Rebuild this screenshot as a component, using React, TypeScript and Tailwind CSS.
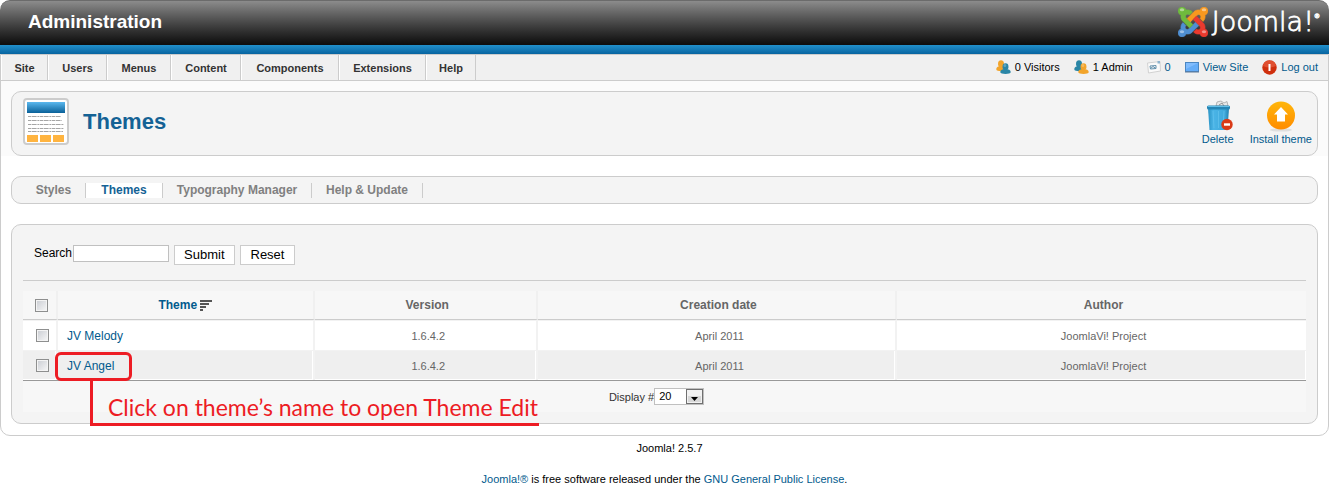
import React from "react";

const navItems = [
  { label: "Site", width: "w-[47px]" },
  { label: "Users", width: "w-[59px]" },
  { label: "Menus", width: "w-[64px]" },
  { label: "Content", width: "w-[70px]" },
  { label: "Components", width: "w-[98px]" },
  { label: "Extensions", width: "w-[87px]" },
  { label: "Help", width: "w-[50px]" },
];

const themes = [
  { name: "JV Melody", version: "1.6.4.2", date: "April 2011", author: "JoomlaVi! Project" },
  { name: "JV Angel", version: "1.6.4.2", date: "April 2011", author: "JoomlaVi! Project" },
];

const markArm =
  "M16.72 14.76L14.22 17.26l-2.37 2.37-.46.47c-1.37 1.36-3.3 1.83-5.05 1.4-.33 1.42-1.6 2.49-3.13 2.49C1.44 23.98 0 22.55 0 20.77c0-1.52 1.06-2.79 2.47-3.13-.44-1.75.02-3.7 1.4-5.07l.1-.1 2.37 2.37-.1.1c-.69.69-.69 1.81 0 2.5.69.69 1.81.69 2.5 0l.46-.47 2.37-2.37 2.5-2.5z";

const markArms = [
  { fill: "#4f8fd2", angle: 0 },
  { fill: "#6fbb3d", angle: 90 },
  { fill: "#f7981f", angle: 180 },
  { fill: "#ea3a2e", angle: 270 },
];

function JoomlaMark() {
  return (
    <svg className="h-[30px] w-[30px]" viewBox="0 0 24 24" aria-hidden="true">
      {markArms.map((arm) => (
        <g key={arm.fill} transform={`rotate(${arm.angle} 12 12)`}>
          <path d={markArm} fill={arm.fill} stroke={arm.fill} strokeWidth="0.5" />
        </g>
      ))}
      <g fill="#fff" opacity="0.45">
        <ellipse cx="3.2" cy="2.2" rx="1.8" ry="1.2" />
        <ellipse cx="20.8" cy="2.2" rx="1.8" ry="1.2" />
        <ellipse cx="3.2" cy="19.8" rx="1.8" ry="1.2" />
        <ellipse cx="20.8" cy="19.8" rx="1.8" ry="1.2" />
      </g>
    </svg>
  );
}

function PeopleIcon({ flip }: { flip?: boolean }) {
  const back = flip ? "#2a86a6" : "#f2a42b";
  const front = flip ? "#f2a42b" : "#2a86a6";
  return (
    <svg className="h-[15px] w-[15px]" viewBox="0 0 15 15" aria-hidden="true">
      <path d="M0.3 9.5 C0.3 6.8 2.5 6 5 6 S10 7 10 9.5 C10 11.8 0.3 11.8 0.3 9.5Z" fill={back} />
      <ellipse cx="5" cy="3.7" rx="3" ry="3.5" fill={back} />
      <path d="M4.3 12.3 C4.3 9.8 6.5 9 9.5 9 S14.7 9.8 14.7 12.3 C14.7 14.6 4.3 14.6 4.3 12.3Z" fill={front} />
      <ellipse cx="9.5" cy="6.7" rx="3" ry="3.4" fill={front} />
      <ellipse cx="8.9" cy="5.6" rx="1.4" ry="1.5" fill="#fff" opacity="0.25" />
    </svg>
  );
}

function MailIcon() {
  return (
    <svg className="h-[14px] w-[14px]" viewBox="0 0 14 14" aria-hidden="true">
      <path d="M0.5 3 L13 1.5 L13.5 11 L1.5 13Z" fill="#fafafa" stroke="#d2d2d2" />
      <path d="M10.5 1 h2.5 v2.5 h-2.5z" fill="#8fb4cf" />
      <path d="M3 6 L9 5.5 V8.5 L3.5 9Z M3.5 8.5 L6 6.5 L9 8.5" fill="none" stroke="#6290ac" />
    </svg>
  );
}

function ScreenIcon() {
  return (
    <svg className="h-[11px] w-[14px]" viewBox="0 0 14 11" aria-hidden="true">
      <rect x="0.5" y="0.5" width="13" height="9" fill="#65adf8" stroke="#4a86c2" />
      <path d="M1 1 H13 L1 7Z" fill="#80bcfd" />
      <path d="M0 10 h14" stroke="#5d7898" />
    </svg>
  );
}

function PowerIcon() {
  return (
    <svg className="h-[15px] w-[15px]" viewBox="0 0 15 15" aria-hidden="true">
      <circle cx="7.5" cy="7.5" r="7.2" fill="#cf2f0d" />
      <path d="M1 6 A6.6 6.6 0 0 1 14 6 Q7.5 9 1 6Z" fill="#e04f30" />
      <rect x="6.5" y="4" width="2" height="7" fill="#fff" />
    </svg>
  );
}

function ThemeIcon() {
  return (
    <svg className="h-[47px] w-[46px]" viewBox="0 0 46 47" aria-hidden="true">
      <defs>
        <linearGradient id="themeHead" x1="0" y1="0" x2="0" y2="1">
          <stop offset="0" stopColor="#5bb8ee" />
          <stop offset="1" stopColor="#0a6199" />
        </linearGradient>
      </defs>
      <rect x="1" y="1" width="44" height="45" rx="3" fill="#fff" stroke="#ccc" strokeWidth="2" />
      <rect x="4" y="4" width="38" height="11" fill="url(#themeHead)" />
      <path d="M5 18.5 H38 M5 22.5 H39 M5 26.5 H41 M5 30.5 H41 M5 33.5 H40" stroke="#a5a5a5" strokeWidth="1" strokeDasharray="3 0.6 5 0.8 2 0.6" />
      <path d="M4 37 h11 v7 h-11z M17 37 h11 v7 h-11z M30 37 h11 v7 h-11z" fill="#ffb440" />
    </svg>
  );
}

function TrashIcon() {
  return (
    <svg className="h-8 w-8" viewBox="0 0 32 32" aria-hidden="true">
      <defs>
        <linearGradient id="bin" x1="0" y1="0" x2="1" y2="0">
          <stop offset="0" stopColor="#2b93c4" />
          <stop offset="0.25" stopColor="#4ab4e6" />
          <stop offset="0.8" stopColor="#3fa9dc" />
          <stop offset="1" stopColor="#2380ae" />
        </linearGradient>
      </defs>
      <path d="M14 6 L15 2 L19 1 L22 3 L25 1.5 L26 6Z" fill="#e9e9e9" stroke="#a5a5a5" strokeWidth="0.8" />
      <path d="M17 5 l3 -2 l2 3" fill="none" stroke="#888" strokeWidth="0.9" />
      <path d="M6 8 H27 L25.5 30 H7.5Z" fill="url(#bin)" />
      <path d="M11 11 L12 28 M16.5 11 V28 M22 11 L21 28" stroke="#5fc0ec" strokeWidth="0.8" />
      <rect x="5" y="5.5" width="23" height="4" rx="1.5" fill="#2585b4" />
      <path d="M6 6.5 H27" stroke="#62bfe8" />
      <circle cx="25" cy="24.5" r="5.7" fill="#d93a17" />
      <rect x="22" y="23.3" width="6" height="2.4" fill="#fff" />
    </svg>
  );
}

function InstallIcon() {
  return (
    <svg className="h-8 w-8" viewBox="0 0 32 32" aria-hidden="true">
      <defs>
        <linearGradient id="upload" x1="0" y1="0" x2="0" y2="1">
          <stop offset="0" stopColor="#ffb60a" />
          <stop offset="1" stopColor="#ff8c00" />
        </linearGradient>
      </defs>
      <ellipse cx="16" cy="30" rx="11" ry="1.6" fill="#dedede" />
      <circle cx="16" cy="15.5" r="14" fill="url(#upload)" />
      <path d="M16 7 L23 14.5 H20 V21.5 H12 V14.5 H9Z" fill="#fff" />
    </svg>
  );
}

function SortIcon() {
  return (
    <svg className="h-[11px] w-[12px]" viewBox="0 0 12 11" aria-hidden="true">
      <path d="M0 1 H12 M0 4 H9 M0 7 H6 M0 10 H3" stroke="#555" strokeWidth="2" />
    </svg>
  );
}

function Tick({ label }: { label: string }) {
  return (
    <input
      type="checkbox"
      aria-label={label}
      className="block h-[13px] w-[13px] appearance-none border border-[#8e8f8f] bg-linear-to-br from-[#c9ccd2] to-[#f8f8f8] shadow-[inset_0_0_0_1px_#f4f4f4] checked:bg-[#0b55a0]"
    />
  );
}

export default function App() {
  const link = "text-[#025a8d] hover:underline";
  const head = "border-r-2 border-b border-r-[#f0f0f0] border-b-[#ccc]";
  const cell = "border-t border-r-2 border-[#f2f2f2]";
  return (
    <div className="bg-white font-['Liberation_Sans',Arial,sans-serif] text-[11px] leading-[14px] text-black">
      <header className="flex h-[45px] items-center justify-between rounded-t-[10px] border-t border-[#6b6b6b] bg-linear-to-b from-[#8c8c8c] to-[#0d0d0d] pr-[9px] pb-[2px] pl-7">
        <h1 className="text-[19px] leading-6 font-bold text-white">Administration</h1>
        <a href="#joomla" aria-label="Joomla!" className="flex items-center gap-1 text-white">
          <JoomlaMark />
          <span className="flex items-start font-['DejaVu_Sans',sans-serif] text-[27px] leading-[30px] font-extralight [-webkit-text-stroke:0.8px_#fff]">
            Joomla!<span className="text-[6px] leading-[18px]">®</span>
          </span>
        </a>
      </header>
      <div className="h-[9px] bg-linear-to-b from-[#2190cb] to-[#0764a0]" />

      <div className="rounded-b-[10px] border border-[#ccc]">
        <div className="flex h-[26px] items-center justify-between border-b border-[#ccc] bg-[#f0f0f0] pr-[10px]">
          <nav className="flex h-full text-[11px] font-bold text-[#333]">
            {navItems.map((item) => (
              <a key={item.label} href={"#" + item.label.toLowerCase()} className={"flex items-center justify-center border-r border-l border-r-[#ccc] border-l-white " + item.width}>
                {item.label}
              </a>
            ))}
          </nav>
          <div className="flex items-center gap-[14px] pb-px">
            <span className="flex items-center gap-1"><PeopleIcon />0 Visitors</span>
            <span className="flex items-center gap-1"><PeopleIcon flip />1 Admin</span>
            <a href="#messages" className="flex items-center gap-1 text-[#025a8d]"><MailIcon />0</a>
            <a href="#view" className="flex items-center gap-1 text-[#025a8d]"><ScreenIcon />View Site</a>
            <a href="#logout" className="flex items-center gap-1 text-[#025a8d]"><PowerIcon />Log out</a>
          </div>
        </div>

        <div className="bg-[#fbfbfb] px-[10px] pt-[10px]">
          <div className="flex h-[65px] items-center justify-between rounded-[10px] border border-[#ccc] bg-[#f4f4f4] pr-[5px] pl-[11px]">
            <div className="flex items-center gap-[14px] pb-[5px]">
              <ThemeIcon />
              <h2 className="pt-[2px] text-[22px] leading-7 font-bold text-[#146295]">Themes</h2>
            </div>
            <div className="flex gap-4 pb-px">
              <button type="button" className="flex flex-col items-center text-[#025a8d]"><TrashIcon />Delete</button>
              <button type="button" className="flex flex-col items-center text-[#025a8d]"><InstallIcon />Install theme</button>
            </div>
          </div>
        </div>

        <div className="flex flex-col gap-5 px-[10px] pt-5 pb-[11px]">
          <nav className="flex h-7 items-center rounded-[10px] border border-[#ccc] bg-[#f4f4f4] pl-[10px] text-xs font-bold text-[#808080]">
            <a href="#styles" className="flex h-[15px] w-[64px] items-center justify-center border-r border-[#ccc]">Styles</a>
            <a href="#themes" aria-current="page" className="flex h-[15px] w-[77px] items-center justify-center border-r border-[#ccc] bg-white text-[#146295]">Themes</a>
            <a href="#typography" className="flex h-[15px] w-[149px] items-center justify-center border-r border-[#ccc]">Typography Manager</a>
            <a href="#update" className="flex h-[15px] w-[111px] items-center justify-center border-r border-[#ccc]">Help &amp; Update</a>
          </nav>

          <main className="rounded-[10px] border border-[#ccc] bg-[#f4f4f4] px-[11px] pt-5 pb-[11px]">
            <form className="flex items-start border-b border-[#ccc] pb-[15px] pl-[11px]" onSubmit={(e) => e.preventDefault()}>
              <label htmlFor="search" className="pt-px pr-px text-xs leading-[14px]">Search</label>
              <input id="search" type="text" className="h-[17px] w-24 border border-[#c0c0c0] bg-white px-1" />
              <button type="submit" className="ml-[5px] h-5 border border-[#ccc] bg-white px-[9px] text-[13px] leading-[18px]">Submit</button>
              <button type="reset" className="ml-[5px] h-5 border border-[#ccc] bg-white px-[10px] text-[13px] leading-[18px]">Reset</button>
            </form>

            <table className="mt-[10px] w-full border-separate border-spacing-0 text-center text-[#666]">
              <thead>
                <tr className="h-[29px] bg-[#f7f7f7] text-xs">
                  <th className={"w-[35px] pl-3 " + head}><Tick label="Select all themes" /></th>
                  <th className={"w-[20%] " + head}>
                    <a href="#sort" className="flex items-center justify-center gap-[3px] text-[#025a8d]">Theme<SortIcon /></a>
                  </th>
                  <th className={"w-[17.4%] pl-1 " + head}>Version</th>
                  <th className={"w-[28%] pl-1 " + head}>Creation date</th>
                  <th className="border-b border-[#ccc] pl-1">Author</th>
                </tr>
              </thead>
              <tbody>
                {themes.map((t, i) => (
                  <tr key={t.name} className={"h-[30px] " + (i % 2 ? "bg-[#efefef] *:shadow-[inset_-1px_-1px_0_#fff]" : "bg-white")}>
                    <td className={"pl-[13px] " + cell}><Tick label={"Select " + t.name} /></td>
                    <td className={"pl-[9px] text-left text-xs " + cell}>
                      {i === 1 ? (
                        <span className="relative">
                          <a href="#angel" className={link}>{t.name}</a>
                          <span className="pointer-events-none absolute -top-[7px] -left-3 h-[29px] w-[77px] rounded-md border-3 border-[#ed1c24]" />
                          <span className="pointer-events-none absolute top-[22px] left-[23px] h-[45px] w-[449px] border-b-3 border-l-3 border-[#ed1c24] pt-3 pl-[15px] font-['Lato',sans-serif] text-[23px] leading-7 whitespace-nowrap text-[#ed1c24]">
                            Click on theme’s name to open Theme Edit
                          </span>
                        </span>
                      ) : (
                        <a href="#melody" className={link}>{t.name}</a>
                      )}
                    </td>
                    <td className={"pl-[6px] " + cell}>{t.version}</td>
                    <td className={"pl-[6px] " + cell}>{t.date}</td>
                    <td className="border-t border-[#f2f2f2] pl-1">{t.author}</td>
                  </tr>
                ))}
              </tbody>
            </table>
            <div className="flex h-8 items-center justify-center border-t border-[#999] bg-[#f7f7f7] pr-4 text-[#333]">
              <label htmlFor="limit">Display #</label>
              <span className="relative flex">
                <select id="limit" defaultValue="20" className="h-[17px] w-[50px] appearance-none border border-[#c0c0c0] bg-white pl-1 text-[11px] leading-[15px] text-black">
                  <option>20</option>
                  <option>50</option>
                </select>
                <svg className="pointer-events-none absolute top-px right-px h-[15px] w-[17px]" viewBox="0 0 17 15" aria-hidden="true">
                  <rect x="0.5" y="0.5" width="16" height="14" fill="#f2f2f2" stroke="#707070" />
                  <rect x="2" y="7" width="13" height="6" fill="#d8d8d8" />
                  <path d="M5 8 h7 l-3.5 4z" fill="#000" />
                </svg>
              </span>
            </div>
          </main>
        </div>
      </div>

      <footer className="flex flex-col items-center gap-[17px] pt-[5px] pb-1">
        <p className="pl-[10px]">Joomla! 2.5.7</p>
        <p><a href="#joomla-home" className={link}>Joomla!®</a> is free software released under the <a href="#gpl" className={link}>GNU General Public License</a>.</p>
      </footer>
    </div>
  );
}
